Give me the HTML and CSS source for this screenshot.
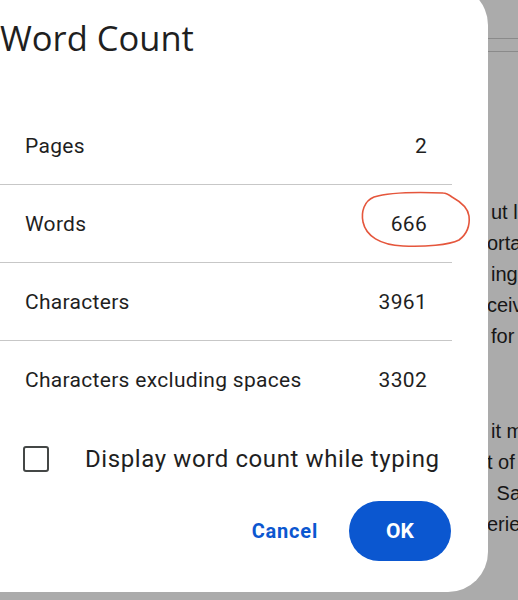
FILE: index.html
```html
<!DOCTYPE html>
<html lang="en">
<head>
<meta charset="utf-8">
<title>Word Count</title>
<link rel="stylesheet" href="styles.css">
</head>
<body>
<div class="doc">
  <div class="toolbar"></div>
  <div class="ruler"></div>
  <div class="para first">
    <div class="line">ut life and</div>
    <div class="line cut">ortant to</div>
    <div class="line">ing the</div>
    <div class="line cut">ceive it</div>
    <div class="line">for the</div>
  </div>
  <div class="para">
    <div class="line">it may</div>
    <div class="line cut">t of the</div>
    <div class="line">&nbsp;Say</div>
    <div class="line cut">erience</div>
  </div>
</div>

<div class="dialog">
  <h1 class="title">Word Count</h1>
  <div class="stats">
    <div class="row"><span>Pages</span><span>2</span></div>
    <div class="row"><span>Words</span><span>666</span></div>
    <div class="row"><span>Characters</span><span>3961</span></div>
    <div class="row"><span>Characters excluding spaces</span><span>3302</span></div>
  </div>
  <label class="check-row">
    <span class="checkbox"></span>
    <span class="check-label">Display word count while typing</span>
  </label>
  <div class="actions">
    <button class="btn-text">Cancel</button>
    <button class="btn-primary">OK</button>
  </div>
</div>

<svg class="scribble" width="120" height="70" viewBox="0 0 120 70">
  <path d="M 88 8 C 62 7, 32 8, 19 12 C 9 16, 6 27, 8 37 C 11 51, 25 60, 48 61 C 70 62, 94 60, 104 55 C 112 49, 115 40, 114 31 C 113 23, 106 17, 97 12 C 93 9, 91 8, 88 8" fill="none" stroke="#e5563c" stroke-width="1.6" stroke-linecap="round"/>
</svg>
</body>
</html>
```

FILE: styles.css
```css
html, body {
  margin: 0;
  padding: 0;
}
body {
  width: 518px;
  height: 600px;
  overflow: hidden;
  background: #ababab;
  position: relative;
}
.doc {
  height: 600px;
  padding-left: 491px;
  font-family: "Liberation Sans", Arial, sans-serif;
  font-size: 20px;
  color: #161616;
  white-space: nowrap;
}
.toolbar {
  height: 38px;
  border-bottom: 1.5px solid #8a8a8a;
  margin-left: -10px;
}
.ruler {
  height: 12px;
  border-bottom: 1.5px solid #8a8a8a;
  margin-left: -10px;
}
.para.first {
  margin-top: 145px;
}
.para {
  margin-top: 64px;
}
.line {
  line-height: 31px;
}
.line.cut {
  margin-left: -4px;
}

.dialog {
  position: absolute;
  left: -40px;
  top: -15px;
  width: 528px;
  height: 607px;
  box-sizing: border-box;
  padding: 15px 36px 0 40px;
  background: #ffffff;
  border-radius: 40px;
  font-family: Roboto, "Open Sans", sans-serif;
  color: #1f1f1f;
}
.title {
  margin: 0 0 47px 0;
  padding-top: 16px;
  font-size: 34.5px;
  line-height: 44px;
  font-weight: 400;
  font-family: "Open Sans", Roboto, sans-serif;
  letter-spacing: 0;
}
.stats {
  width: 452px;
}
.row {
  height: 78px;
  box-sizing: border-box;
  padding: 0 25px;
  display: flex;
  justify-content: space-between;
  align-items: center;
  font-size: 21px;
  letter-spacing: 0.3px;
  border-bottom: 1px solid #c7c7c7;
}
.row:last-child {
  border-bottom: none;
}
.check-row {
  height: 80px;
  display: flex;
  align-items: center;
}
.checkbox {
  width: 26px;
  height: 26px;
  box-sizing: border-box;
  margin-left: 23px;
  border: 2.5px solid #444746;
  border-radius: 3px;
}
.check-label {
  margin-left: 36px;
  font-size: 24px;
  letter-spacing: 0.6px;
}
.actions {
  width: 452px;
  margin-top: 2px;
  display: flex;
  justify-content: flex-end;
  align-items: center;
}
.btn-text {
  border: none;
  background: none;
  padding: 0;
  margin-right: 31px;
  font-family: Roboto, sans-serif;
  font-weight: 700;
  font-size: 20px;
  letter-spacing: 0.8px;
  color: #0b57d0;
}
.btn-primary {
  width: 102px;
  height: 60px;
  margin-right: 1px;
  border: none;
  border-radius: 30px;
  background: #0b57d0;
  color: #ffffff;
  font-family: Roboto, sans-serif;
  font-weight: 700;
  font-size: 21px;
}
.scribble {
  position: absolute;
  left: 355px;
  top: 185px;
}
```
